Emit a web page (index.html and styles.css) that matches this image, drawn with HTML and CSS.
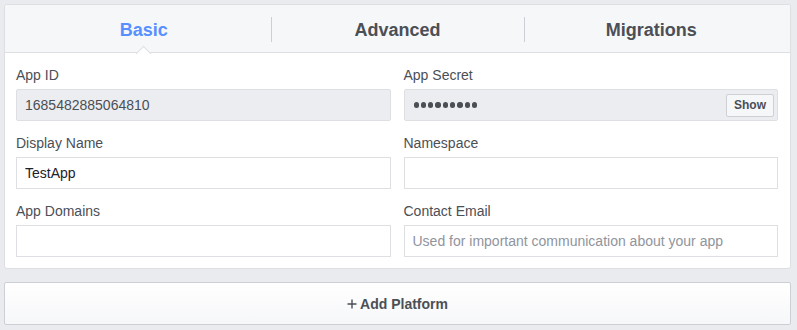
FILE: index.html
```html
<!DOCTYPE html>
<html lang="en">
<head>
    <meta charset="UTF-8">
    <meta name="viewport" content="width=device-width, initial-scale=1.0">
    <title>App Settings</title>
    <link rel="stylesheet" href="styles.css">
</head>
<body>

<div class="card">
    <div class="tabs">
        <div class="tab active">Basic</div>
        <div class="tab">Advanced</div>
        <div class="tab">Migrations</div>
    </div>
    <form class="fields">
        <div class="form-group">
            <label>App ID</label>
            <div class="field readonly">1685482885064810</div>
        </div>
        <div class="form-group">
            <label>App Secret</label>
            <div class="field readonly secret">
                <span class="dots">
                    <i></i><i></i><i></i><i></i><i></i><i></i><i></i><i></i><i></i>
                </span>
                <button type="button" class="show-btn">Show</button>
            </div>
        </div>
        <div class="form-group">
            <label for="displayName">Display Name</label>
            <input type="text" id="displayName" value="TestApp">
        </div>
        <div class="form-group">
            <label for="namespace">Namespace</label>
            <input type="text" id="namespace">
        </div>
        <div class="form-group">
            <label for="appDomains">App Domains</label>
            <input type="text" id="appDomains">
        </div>
        <div class="form-group">
            <label for="contactEmail">Contact Email</label>
            <input type="text" id="contactEmail" placeholder="Used for important communication about your app">
        </div>
    </form>
</div>

<button type="button" class="add-platform">
    <svg class="plus" width="10" height="10" viewBox="0 0 10 10"><path d="M5 0.5v9M0.5 5h9" stroke="#4b4f56" stroke-width="1.4" fill="none"/></svg>Add Platform
</button>

</body>
</html>
```

FILE: styles.css
```css
body {
    font-family: "Liberation Sans", Arial, sans-serif;
    margin: 0;
    padding: 4px 6px 0 4px;
    background-color: #e9ebee;
    color: #4b4f56;
}
.card {
    background-color: #fff;
    border: 1px solid #dddfe2;
    border-radius: 3px;
}
.tabs {
    display: flex;
    height: 47px;
    padding: 0 12px;
    background-color: #f6f7f9;
    border-bottom: 1px solid #dddfe2;
    border-radius: 3px 3px 0 0;
}
.tab {
    flex: 1;
    position: relative;
    display: flex;
    align-items: center;
    justify-content: center;
    padding-top: 3px;
    font-size: 18px;
    font-weight: bold;
    color: #4b4f56;
}
.tab + .tab::before {
    content: "";
    position: absolute;
    left: 0;
    top: 12px;
    height: 25px;
    border-left: 1px solid #ccd0d5;
}
.tab.active {
    color: #5890ff;
}
.tab.active::after {
    content: "";
    position: absolute;
    left: 50%;
    bottom: -7px;
    width: 10px;
    height: 10px;
    margin-left: -6px;
    background-color: #fff;
    border-top: 1px solid #dddfe2;
    border-left: 1px solid #dddfe2;
    transform: rotate(45deg);
}
.fields {
    display: grid;
    grid-template-columns: 1fr 1fr;
    column-gap: 13px;
    row-gap: 13px;
    padding: 13px 12px 11px 11px;
    margin: 0;
}
label {
    display: block;
    font-size: 14px;
    line-height: 18px;
    margin-bottom: 5px;
    color: #4b4f56;
}
input, .field {
    display: flex;
    align-items: center;
    width: 100%;
    height: 32px;
    padding: 0 8px;
    margin: 0;
    font-family: inherit;
    font-size: 14px;
    color: #1d2129;
    border: 1px solid #dddfe2;
    border-radius: 0;
    box-sizing: border-box;
    outline: none;
}
input::placeholder {
    color: #90949c;
}
.field.readonly {
    background-color: #ebedf0;
    border-radius: 2px;
    color: #4b4f56;
}
.secret {
    justify-content: space-between;
    padding-right: 3px;
}
.dots {
    display: flex;
    gap: 2px;
    margin-left: 1px;
}
.dots i {
    width: 5.3px;
    height: 5.3px;
    border-radius: 50%;
    background-color: #4b4f56;
}
.show-btn {
    width: 48px;
    height: 23px;
    padding: 0;
    font-family: inherit;
    font-size: 12px;
    font-weight: bold;
    color: #4b4f56;
    background-color: #f6f7f9;
    border: 1px solid #ced0d4;
    border-radius: 2px;
}
.add-platform {
    display: flex;
    align-items: center;
    justify-content: center;
    width: 100%;
    height: 43px;
    margin-top: 13px;
    font-family: inherit;
    font-size: 14px;
    font-weight: bold;
    color: #4b4f56;
    background: linear-gradient(#fff, #f6f7f9);
    border: 1px solid #ccd0d5;
    border-radius: 2px;
}
.plus {
    margin-right: 3px;
    margin-top: 1px;
}
```
